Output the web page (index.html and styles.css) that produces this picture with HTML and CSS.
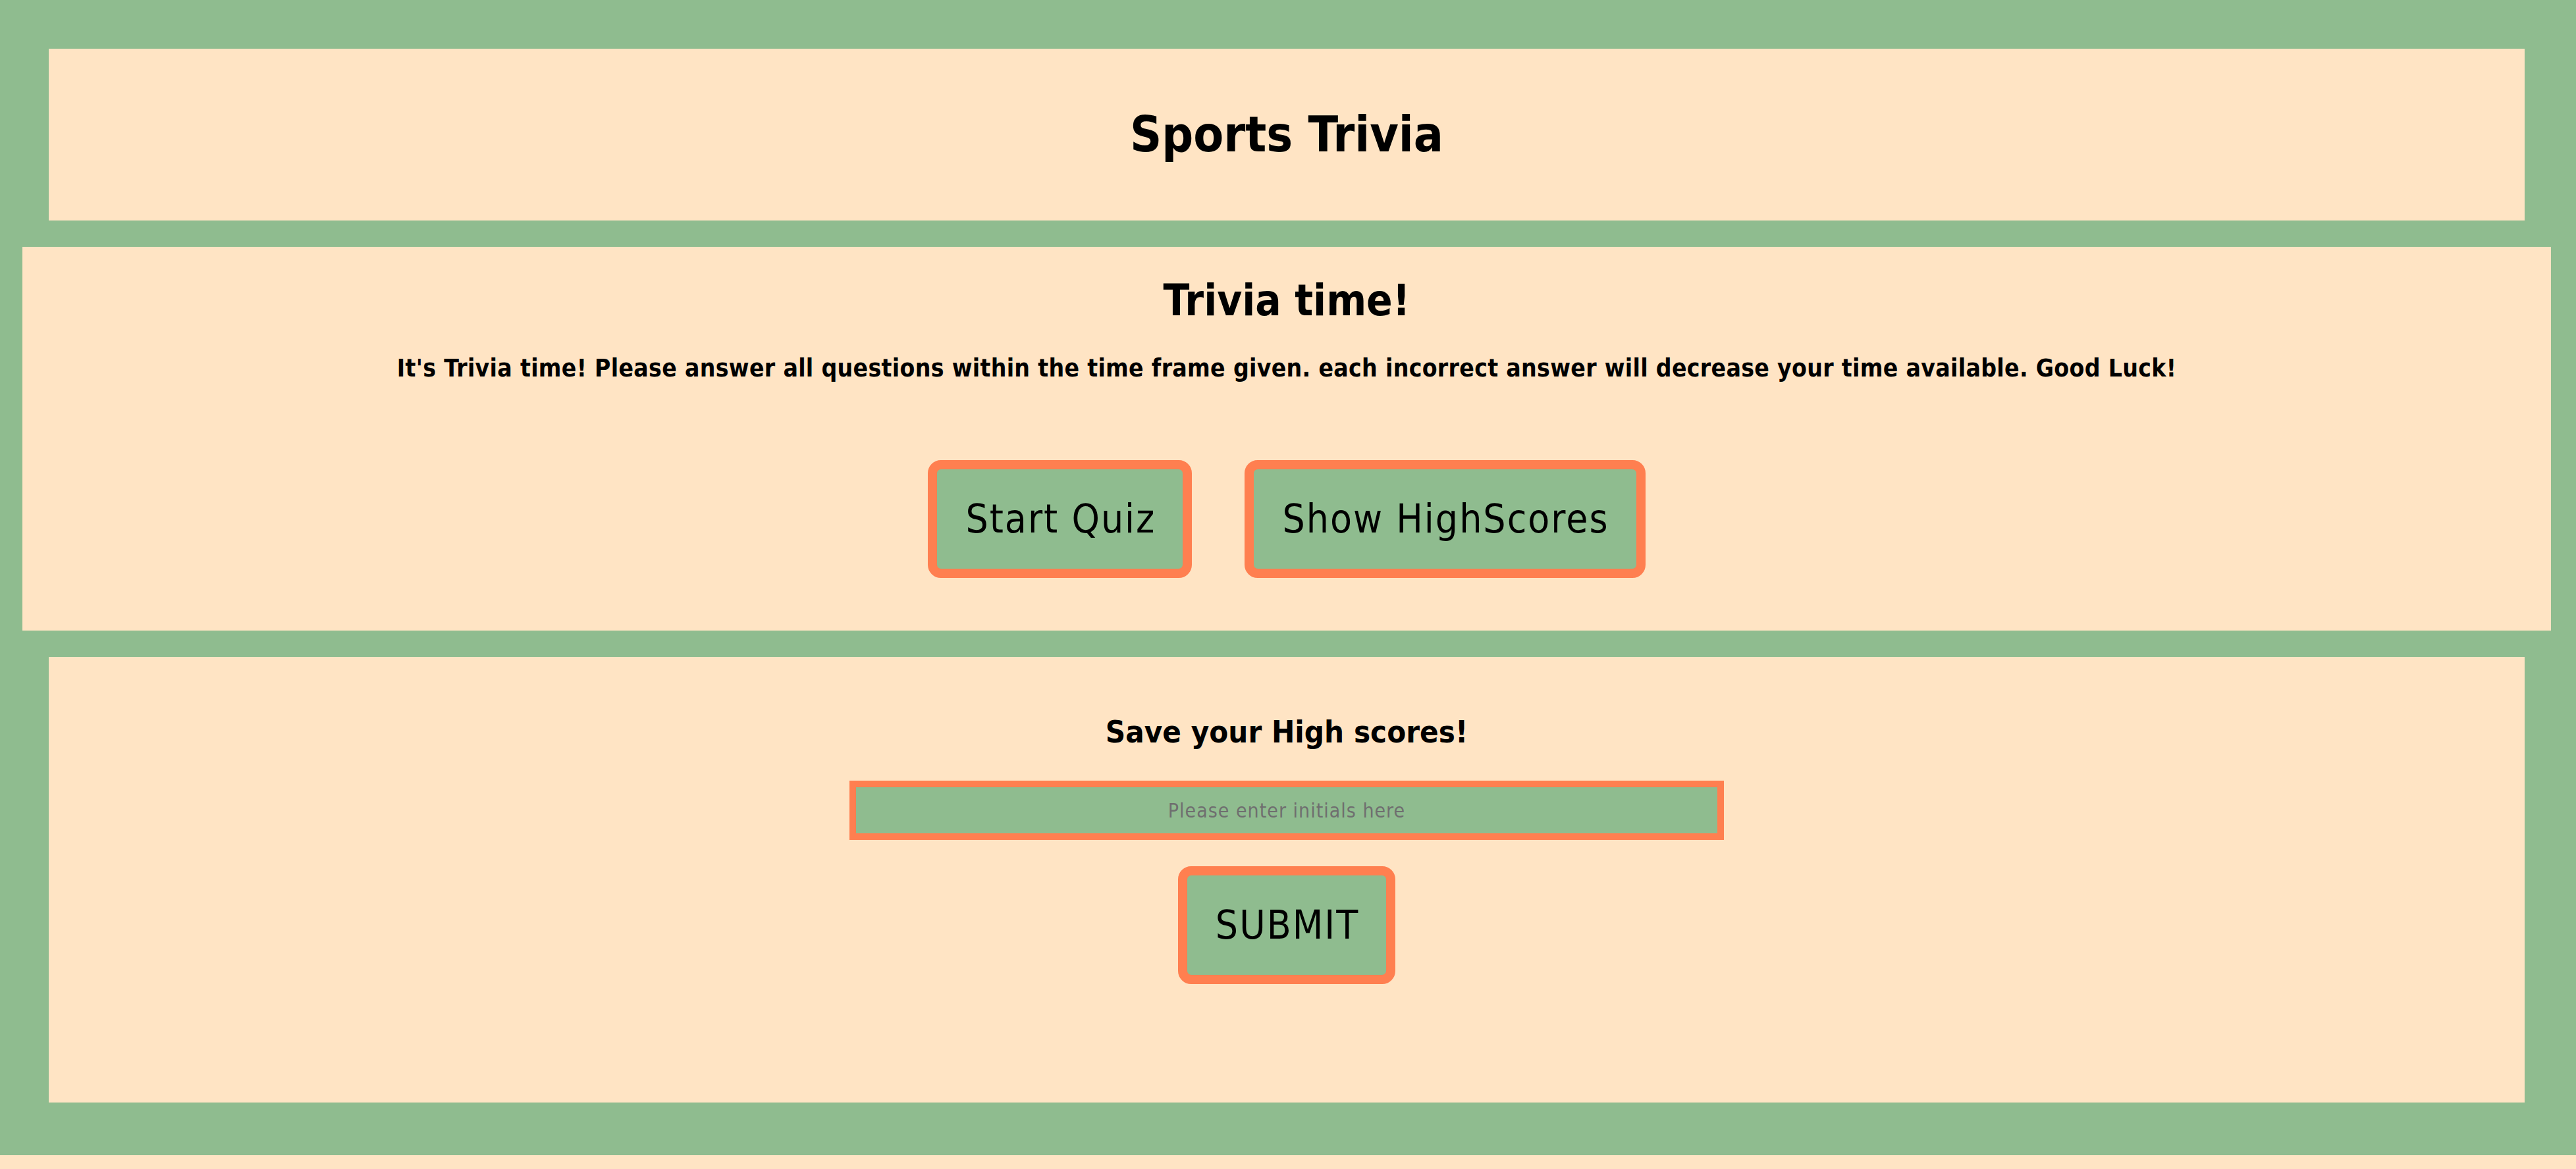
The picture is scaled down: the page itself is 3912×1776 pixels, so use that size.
FILE: index.html
```html
<!DOCTYPE html>
<html lang="en">
<head>
<meta charset="utf-8">
<title>Sports Trivia</title>
<link rel="stylesheet" href="styles.css">
</head>
<body>
<div class="page">
  <header class="header">
    <h1 class="title">Sports Trivia</h1>
  </header>
  <section class="intro">
    <h2 class="intro-title">Trivia time!</h2>
    <p class="intro-text">It's Trivia time! Please answer all questions within the time frame given. each incorrect answer will decrease your time available. Good Luck!</p>
    <div class="actions">
      <button class="btn">Start Quiz</button>
      <button class="btn">Show HighScores</button>
    </div>
  </section>
  <section class="scores">
    <h3 class="scores-title">Save your High scores!</h3>
    <input class="initials" type="text" placeholder="Please enter initials here">
    <button class="btn">SUBMIT</button>
  </section>
</div>
</body>
</html>
```

FILE: styles.css
```css
html, body {
  margin: 0;
  background: #ffe4c4;
}

body {
  font-family: "DejaVu Sans Condensed", "DejaVu Sans", sans-serif;
  font-stretch: condensed;
  color: #000;
}

.page {
  background: #8fbc8f;
  padding: 74px 38px 80px 34px;
  display: flex;
  flex-direction: column;
  gap: 40px;
}

.header {
  background: #ffe4c4;
  margin: 0 40px;
  padding: 88px 0 87px;
  text-align: center;
}

.title {
  margin: 0;
  font-size: 74.5px;
  font-weight: bold;
  line-height: 86px;
}

.intro {
  background: #ffe4c4;
  padding: 44px 0 80px;
  text-align: center;
}

.intro-title {
  margin: 0 0 43px;
  font-size: 65px;
  font-weight: bold;
  line-height: 76px;
}

.intro-text {
  margin: 0 0 118px;
  font-size: 37px;
  font-weight: bold;
  line-height: 43px;
  letter-spacing: 0.3px;
}

.actions {
  display: flex;
  justify-content: center;
  gap: 80px;
}

.btn {
  font-family: inherit;
  font-stretch: condensed;
  font-size: 60px;
  line-height: 71px;
  letter-spacing: 2px;
  color: #000;
  background: #8fbc8f;
  border: 14px solid #ff7f50;
  border-radius: 20px;
  padding: 40px 41px 40px 43px;
  margin: 0;
  cursor: pointer;
}

.scores {
  background: #ffe4c4;
  margin: 0 40px;
  padding: 86px 0 180px;
  display: flex;
  flex-direction: column;
  align-items: center;
}

.scores-title {
  margin: 0 0 47px;
  font-size: 47px;
  font-weight: bold;
  line-height: 55px;
}

.initials {
  box-sizing: border-box;
  width: 1328px;
  height: 90px;
  border: 10px solid #ff7f50;
  background: #8fbc8f;
  font-family: inherit;
  font-stretch: condensed;
  font-size: 30px;
  letter-spacing: 1px;
  text-align: center;
  margin: 0 0 40px;
  padding: 0;
  outline: none;
}

.initials::placeholder {
  color: #6f6f6f;
}
```
